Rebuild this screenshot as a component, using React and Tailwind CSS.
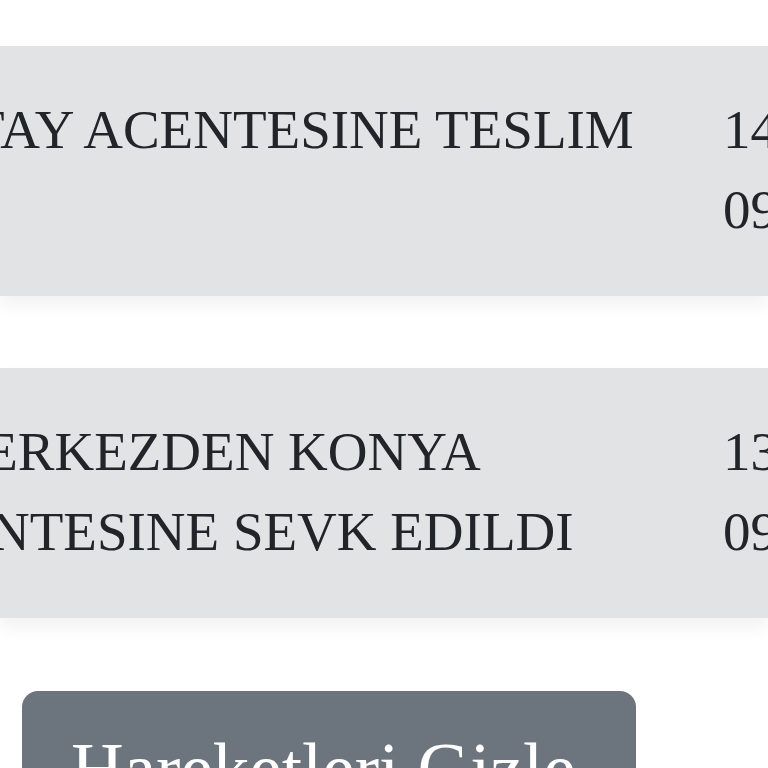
import React from 'react';

const movements = [
  { text: 'KONYA KARATAY ACENTESINE TESLIM', date: '14.10.2023', time: '09:45' },
  { text: 'HADIMKÖY MERKEZDEN KONYA KARATAY ACENTESINE SEVK EDILDI', date: '13.10.2023', time: '09:12' },
];

const MovementRow = ({ item }) => (
  <div className="bg-[#e2e3e5] shadow-[0_10px_16px_rgba(0,0,0,0.05)] pt-[44px] pb-[46px]">
    <div className="flex -ml-[382px] gap-[33px] text-[#212529]">
      <div className="w-[1072px] shrink-0">{item.text}</div>
      <div className="whitespace-nowrap">
        <div>{item.date}</div>
        <div>{item.time}</div>
      </div>
    </div>
  </div>
);

export default function App() {
  return (
    <div className="w-[768px] h-[768px] overflow-hidden bg-white font-['Liberation_Serif',serif] text-[55px] leading-[80px]">
      <div className="pt-[46px] flex flex-col gap-[72px]">
        {movements.map((m, i) => (
          <MovementRow key={i} item={m} />
        ))}
      </div>
      <div className="mt-[73px] ml-[22px]">
        <button className="w-[614px] text-left bg-[#6c757d] text-white rounded-[16px] pl-[49px] pt-[24px] pb-[22px] text-[73px] leading-[110px] whitespace-nowrap">
          Hareketleri Gizle
        </button>
      </div>
    </div>
  );
}
